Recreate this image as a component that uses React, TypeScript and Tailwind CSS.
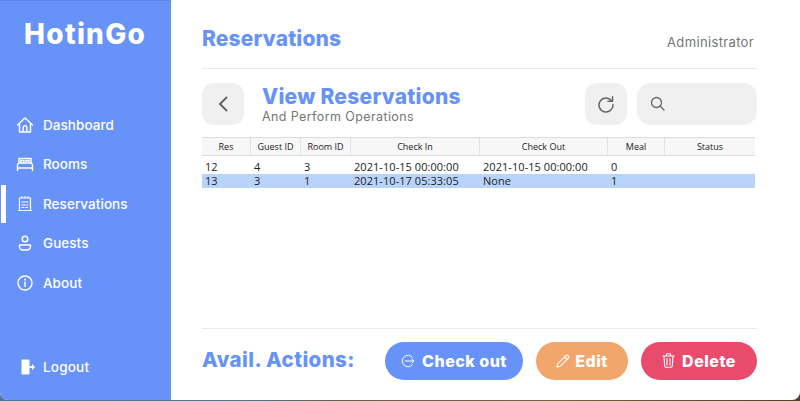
import React from "react";

const Nav = ({ label, active, icon }: { label: string; active?: boolean; icon: React.ReactNode }) => (
  <div className="relative flex h-[39.5px] items-center pl-[16px]">
    {active && <div className="absolute left-[1px] top-[1px] h-[38px] w-[5px] bg-white" />}
    <span className="flex w-[18px] justify-center">{icon}</span>
    <span className="ml-[9px] text-[13.5px] font-medium tracking-[0.05px] text-white">{label}</span>
  </div>
);

const ico = { width: 18, height: 18, viewBox: "0 0 18 18", fill: "none", stroke: "white", strokeWidth: 1.4, strokeLinejoin: "round" as const, strokeLinecap: "round" as const };

const cols: [string, number][] = [
  ["Res", 49],
  ["Guest ID", 50],
  ["Room ID", 50],
  ["Check In", 129],
  ["Check Out", 128],
  ["Meal", 57],
  ["Status", 90],
];

const Row = ({ cells, selected }: { cells: string[]; selected?: boolean }) => (
  <div className={`flex h-[14px] w-[553px] items-center text-[11px] leading-[14px] tracking-[0.05px] text-[#222] ${selected ? "bg-[#b8d4fb]" : ""}`}>
    {cells.map((c, i) => (
      <div key={i} className="pl-[3px]" style={{ width: cols[i][1] }}>{c}</div>
    ))}
  </div>
);

export default function App() {
  return (
    <div className="h-[401px] w-[800px] overflow-hidden bg-[linear-gradient(90deg,#55728f_0%,#5b7188_30%,#6b5c50_42%,#7a5c42_70%,#5a3d28_100%)] [font-family:Inter,sans-serif]">
      <div className="flex h-[400px] w-[800px] overflow-hidden rounded-b-[8px] bg-white">
        <aside className="flex h-full w-[171px] shrink-0 flex-col border-t border-[#5c86ea] bg-[#6792f8]">
          <div className="mt-[15px] pl-[24px] text-[28px] font-extrabold leading-[36px] tracking-[1.3px] text-white">HotinGo</div>
          <nav className="mt-[53px] flex flex-col">
            <Nav label="Dashboard" icon={
              <svg {...ico}><path d="M1.5 9 9 2l7.5 7M3.5 8v8h11V8M7.2 16v-4.5a1.8 1.8 0 0 1 3.6 0V16" /></svg>
            } />
            <Nav label="Rooms" icon={
              <svg {...ico}><path d="M3 8V3.5h12V8M1.5 15.5V9.5L3 8h12l1.500 1.500v6M1.500 13h15" /><path d="M5 7V5.500h3V7M10 7V5.500h3V7" /></svg>
            } />
            <Nav label="Reservations" active icon={
              <svg {...ico} strokeWidth={1.2}><path d="M3.500 3h11v12.500h-11zM2.500 15.500h13M6 3V1.500M9 3V1.500M12 3V1.500M6 7h6M6 10h3.500M11 10h1M6 12.500h2M10 12.500h1.500" /></svg>
            } />
            <Nav label="Guests" icon={
              <svg {...ico}><circle cx="9" cy="5" r="2.800" /><path d="M3.500 11h11v1.500a3.500 3.500 0 0 1-3.500 3.500H7a3.500 3.500 0 0 1-3.500-3.500z" /></svg>
            } />
            <Nav label="About" icon={
              <svg {...ico}><circle cx="9" cy="9" r="7" /><path d="M9 8.200v4.300" /><path d="M9 5.500v.3" strokeWidth={1.8} /></svg>
            } />
          </nav>
          <div className="mt-auto mb-[13px] flex h-[40px] items-center pl-[21px]">
            <svg width="14" height="16" viewBox="0 0 14 16" fill="white"><path d="M0.500 1.500a1 1 0 0 1 1-1h6a1 1 0 0 1 1 1v13a1 1 0 0 1-1 1h-6a1 1 0 0 1-1-1z" /><path d="M8.500 7h2.500V5l3 3-3 3V9H8.500z" /></svg>
            <span className="ml-[8px] text-[13.5px] font-medium tracking-[0.2px] text-white">Logout</span>
          </div>
        </aside>
        <main className="flex min-w-0 flex-1 flex-col pl-[31px] pr-[43px]">
          <header className="flex h-[69px] items-center justify-between border-b border-[#e9e9e9] pt-[12px]">
            <h1 className="mt-[-3px] text-[21px] font-extrabold tracking-[0.15px] text-[#6792f8]">Reservations</h1>
            <span className="mt-[5px] mr-[3px] text-[13px] tracking-[0.35px] text-[#757575]">Administrator</span>
          </header>
          <section className="mt-[13px] flex h-[43px] items-center">
            <button className="flex h-[42px] w-[42px] items-center justify-center rounded-[12px] bg-[#f0f0f0]">
              <svg className="ml-[2px]" width="14" height="18" viewBox="0 0 14 18" fill="none" stroke="#666" strokeWidth="2"><path d="M10 2 3 9l7 7" /></svg>
            </button>
            <div className="ml-[18px] flex flex-col">
              <span className="text-[21px] font-extrabold leading-[25px] tracking-[0.25px] text-[#6792f8]">View Reservations</span>
              <span className="text-[12.5px] leading-[15px] tracking-[0.4px] text-[#757575]">And Perform Operations</span>
            </div>
            <button className="ml-auto flex h-[42px] w-[42px] items-center justify-center rounded-[12px] bg-[#f0f0f0]">
              <svg width="18" height="18" viewBox="0 0 18 18" fill="none" stroke="#666" strokeWidth="1.500" strokeLinecap="round"><path d="M14.800 6A7 7 0 1 0 16 9.500" /><path d="M15.500 1.800V6.200H11" /></svg>
            </button>
            <div className="ml-[10px] flex h-[42px] w-[120px] items-center rounded-[14px] bg-[#f0f0f0] pl-[13px]">
              <svg width="15" height="15" viewBox="0 0 15 15" fill="none" stroke="#666" strokeWidth="1.300" strokeLinecap="round"><circle cx="6.500" cy="6.500" r="5" /><path d="m10.300 10.300 3.700 3.700" /></svg>
            </div>
          </section>
          <section className="mt-[12px] w-[553px] [font-family:'Open_Sans',sans-serif]">
            <div className="flex h-[19px] border-y border-[#dcdcdc] bg-[#f7f7f7] text-[9px] text-[#222]">
              {cols.map(([label, w], i) => (
                <div key={label} className={`flex items-center justify-center ${i < 6 ? "border-r border-[#e2e2e2]" : ""}`} style={{ width: w }}>{label}</div>
              ))}
            </div>
            <div className="mt-[4px]" />
            <Row cells={["12", "4", "3", "2021-10-15 00:00:00", "2021-10-15 00:00:00", "0", ""]} />
            <Row selected cells={["13", "3", "1", "2021-10-17 05:33:05", "None", "1", ""]} />
          </section>
          <footer className="mt-auto flex h-[72px] items-center border-t border-[#e9e9e9] pb-[8px]">
            <span className="text-[20.5px] font-extrabold tracking-[0.4px] text-[#6792f8]">Avail. Actions:</span>
            <div className="ml-auto flex items-center gap-[13px]">
              <button className="flex h-[38px] w-[138px] items-center justify-center gap-[7px] rounded-full bg-[#6792f8] text-[16px] font-extrabold tracking-[0.5px] text-white">
                <svg width="14" height="14" viewBox="0 0 14 14" fill="none" stroke="white" strokeWidth="1"><path d="M11.500 3.500A5.700 5.700 0 1 0 11.500 10.500" /><path d="M4 7h9M10.500 4.800 13 7l-2.500 2.200" /></svg>
                Check out
              </button>
              <button className="flex h-[38px] w-[92px] items-center justify-center gap-[5px] rounded-full bg-[#f3a66c] text-[16px] font-extrabold tracking-[0.5px] text-white">
                <svg width="14" height="14" viewBox="0 0 14 14" fill="none" stroke="white" strokeWidth="1.100" strokeLinejoin="round"><path d="M1 13l.8-3.400L9.800 1.600a1.500 1.500 0 0 1 2.100 0l.5.5a1.500 1.500 0 0 1 0 2.100L4.400 12.200z" /><path d="M8.500 3l2.500 2.500" /></svg>
                Edit
              </button>
              <button className="flex h-[38px] w-[116px] items-center justify-center gap-[7px] rounded-full bg-[#e94b6c] text-[16px] font-extrabold tracking-[0.5px] text-white">
                <svg width="13" height="15" viewBox="0 0 13 15" fill="none" stroke="white" strokeWidth="1.100" strokeLinecap="round"><path d="M.8 3h11.400M4.500 3V1.500a.8.8 0 0 1 .8-.8h2.400a.8.8 0 0 1 .8.8V3M2 3l.7 10a1.200 1.200 0 0 0 1.200 1.200h5.200A1.200 1.200 0 0 0 10.300 13L11 3M5 5.500V12M8 5.500V12" /></svg>
                Delete
              </button>
            </div>
          </footer>
        </main>
      </div>
    </div>
  );
}
